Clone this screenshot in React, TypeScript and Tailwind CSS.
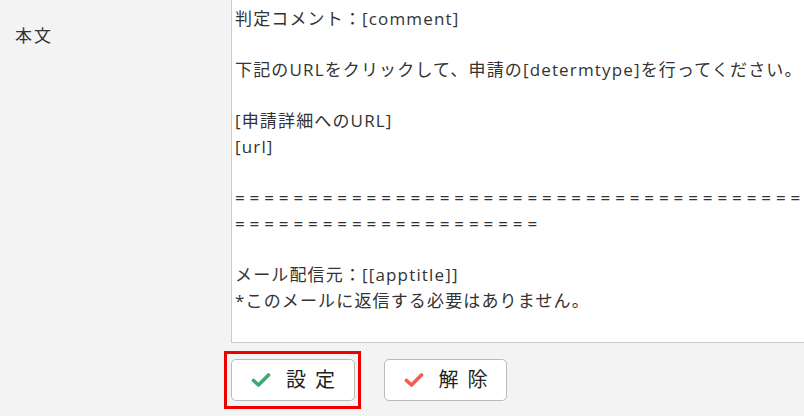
const lines: string[] = [
  "判定コメント：[comment]",
  "",
  "下記のURLをクリックして、申請の[determtype]を行ってください。",
  "",
  "[申請詳細へのURL]",
  "[url]",
  "",
  "=".repeat(40),
  "=".repeat(21),
  "",
  "メール配信元：[[apptitle]]",
  "*このメールに返信する必要はありません。",
];

function Check({ color }: { color: string }) {
  return (
    <svg width="20" height="16" viewBox="0 0 20 16" fill="none">
      <path
        d="M2.5 8.5 L7.5 13 L17.5 3"
        stroke={color}
        strokeWidth="3.6"
        strokeLinecap="round"
        strokeLinejoin="round"
      />
    </svg>
  );
}

export default function App() {
  return (
    <div
      className="w-[804px] h-[416px] overflow-hidden bg-[#f3f3f3] text-[#333]"
      style={{ fontFamily: '"Open Sans", "Noto Sans CJK JP", sans-serif' }}
    >
      <div className="flex">
        <div className="w-[231px] shrink-0 pl-[15px] pt-[23px] text-[17px] leading-[26px] tracking-[2px]">
          本文
        </div>
        <div className="w-[620px] shrink-0 h-[343px] bg-white border-l border-b border-[#cccccc] pl-[3px] pt-[6px] overflow-hidden">
          {lines.map((l, i) => (
            <div
              key={i}
              className={
                l.startsWith("=")
                  ? "h-[25.6px] text-[17px] leading-[25.6px] tracking-[4.9px] whitespace-nowrap"
                  : "h-[25.6px] text-[17px] leading-[25.6px] tracking-[1.15px] whitespace-nowrap"
              }
            >
              {l || "\u00a0"}
            </div>
          ))}
        </div>
      </div>
      <div className="flex items-center gap-[23px] pl-[224px] pt-[8px]">
        <div className="border-[3px] border-[#ee0000] py-[5px] pl-[4px] pr-[3px]">
          <button className="flex items-center justify-center gap-[15px] w-[124px] h-[42px] bg-white border border-[#bbbbbb] rounded-[5px] text-[20px] tracking-[9px] text-[#222]">
            <Check color="#3cab72" />
            <span className="-mr-[9px]">設定</span>
          </button>
        </div>
        <button className="flex items-center justify-center gap-[15px] w-[123px] h-[42px] bg-white border border-[#bbbbbb] rounded-[5px] text-[20px] tracking-[9px] text-[#222]">
          <Check color="#f0604f" />
          <span className="-mr-[9px]">解除</span>
        </button>
      </div>
    </div>
  );
}
